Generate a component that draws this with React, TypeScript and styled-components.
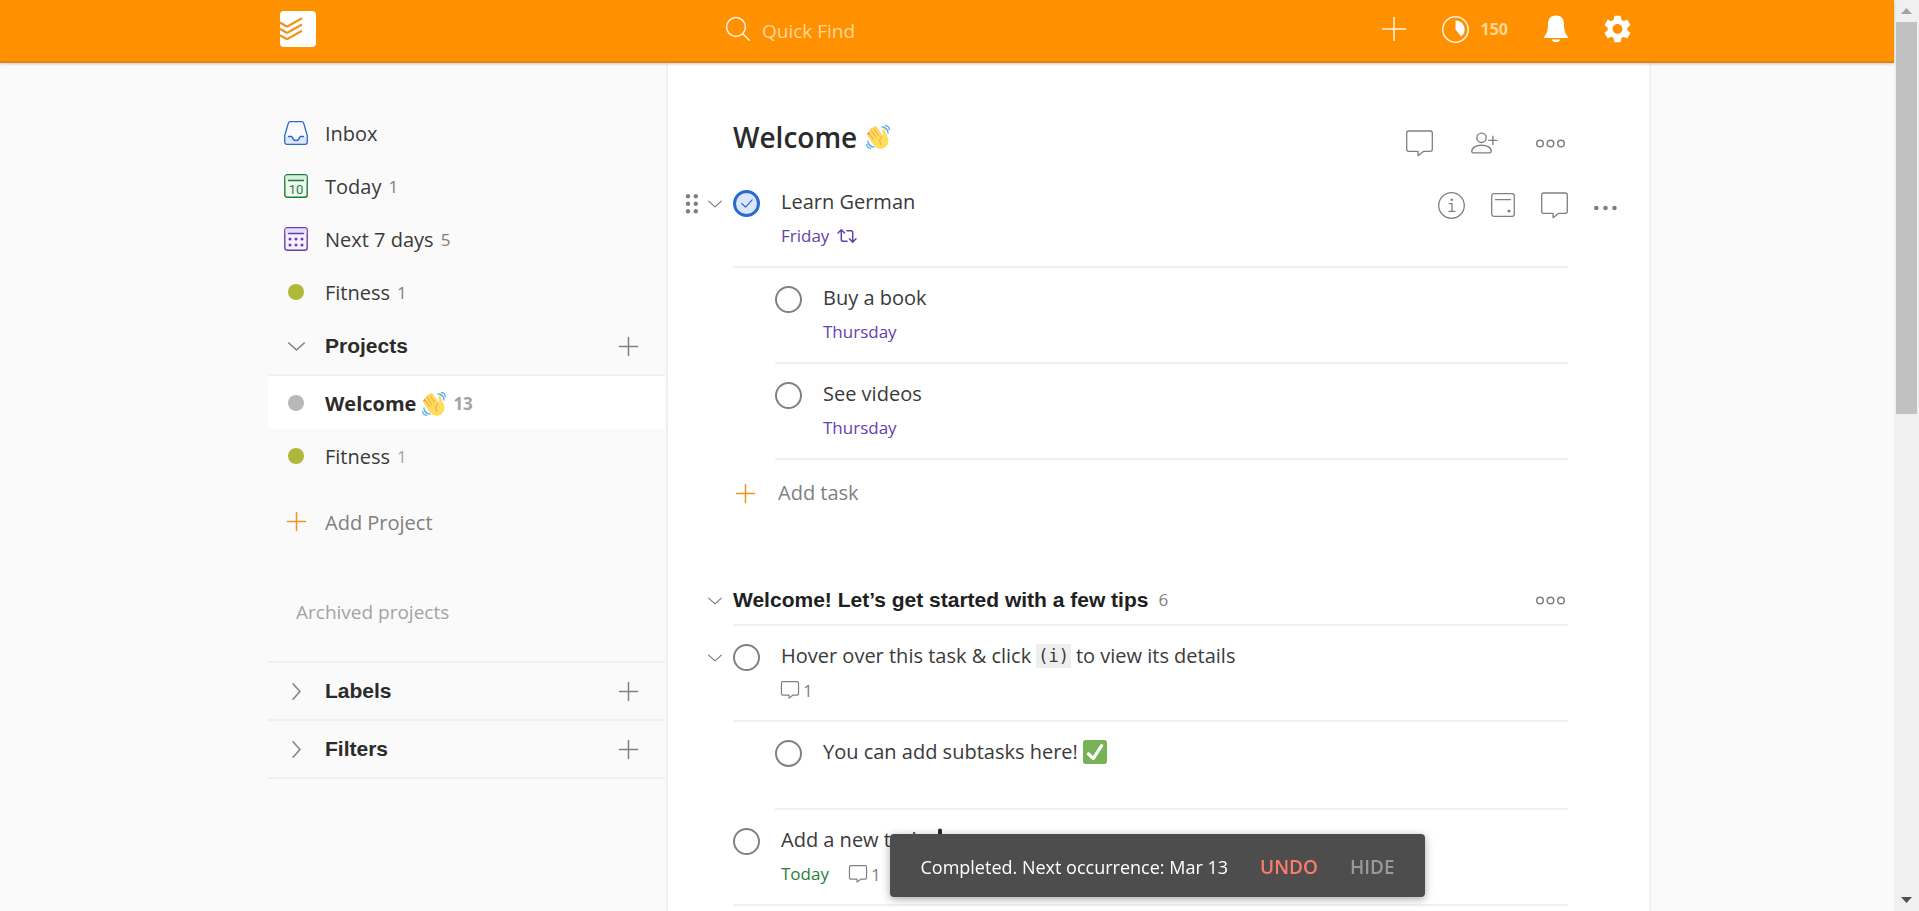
import React from 'react';
import styled, { createGlobalStyle, css } from 'styled-components';

const sans = `'Segoe UI', 'Open Sans', 'Noto Sans', sans-serif`;
const heading = `'Liberation Sans', Arial, sans-serif`;

const color = {
  orange: '#ff9100',
  orangeDark: '#e0840f',
  text: '#3a3a3a',
  strong: '#2b2b2b',
  gray: '#808080',
  light: '#a3a3a3',
  line: '#f0f0f0',
  panel: '#fafafa',
  purple: '#6440ae',
  green: '#1f7f36',
  blue: '#2a6ad0',
  olive: '#afb83b',
  cream: '#ffd79b',
};

const GlobalStyle = createGlobalStyle`
  *, *::before, *::after { box-sizing: border-box; }
  body {
    margin: 0;
    font-family: ${sans};
    font-size: 20px;
    line-height: 28px;
    color: ${color.text};
    background: ${color.panel};
  }
  button {
    padding: 0;
    border: 0;
    background: none;
    font: inherit;
    color: inherit;
    cursor: pointer;
  }
  a { color: inherit; text-decoration: none; }
  h1, h2, ul { margin: 0; padding: 0; }
  ul { list-style: none; }
  svg { display: block; flex: none; overflow: visible; }
`;

/* ---------- shell ---------- */

const Shell = styled.div`
  display: flex;
  height: 100vh;
`;

const Page = styled.div`
  flex: 1;
  min-width: 0;
  display: flex;
  flex-direction: column;
`;

const Container = styled.div`
  width: 100%;
  max-width: 1408px;
  margin: 0 auto;
`;

const TopBar = styled.header`
  position: relative;
  z-index: 1;
  background: ${color.orange};
  border-bottom: 2px solid ${color.orangeDark};
  box-shadow: 0 1px 3px rgba(0, 0, 0, 0.2);
`;

const TopBarInner = styled(Container)`
  display: flex;
  align-items: center;
  height: 61px;
  padding: 0 20px 3px 37px;
`;

const Search = styled.label`
  display: flex;
  align-items: center;
  gap: 12px;
  margin-left: 410px;
`;

const SearchInput = styled.input`
  width: 320px;
  height: 32px;
  padding: 4px 0 0;
  border: 0;
  outline: 0;
  background: none;
  font: 19px ${sans};
  color: #fff;
  &::placeholder { color: ${color.cream}; opacity: 1; }
`;

const TopActions = styled.div`
  display: flex;
  align-items: center;
  gap: 36px;
  margin-left: auto;
  color: #fff;
`;

const KarmaButton = styled.button`
  display: flex;
  align-items: center;
  gap: 12px;
`;

const KarmaScore = styled.span`
  font-size: 16px;
  font-weight: 700;
  color: ${color.cream};
`;

const Scroller = styled.div`
  flex: 1;
  min-height: 0;
  overflow-y: auto;
  scrollbar-width: none;
`;

const Columns = styled(Container)`
  display: flex;
  min-height: 100%;
  padding-left: 25px;
`;

const ScrollTrack = styled.div`
  display: flex;
  flex-direction: column;
  align-items: center;
  width: 25px;
  background: #f0f0f0;
`;

const ScrollArrow = styled.div`
  display: flex;
  align-items: center;
  justify-content: center;
  height: 22px;
`;

const ScrollThumb = styled.div`
  width: 21px;
  height: 43%;
  background: #c1c1c1;
`;

const ScrollGap = styled.div`
  flex: 1;
`;

/* ---------- sidebar ---------- */

const Sidebar = styled.nav`
  width: 400px;
  flex: none;
  padding: 43px 1px 0 0;
  border-right: 2px solid ${color.line};
`;

const SideLink = styled.a<{ $active?: boolean }>`
  display: flex;
  align-items: center;
  gap: 17px;
  height: 53px;
  padding: 0 16px;
  border-radius: 4px;
  ${(p) => p.$active && css`
    background: #fff;
    color: ${color.strong};
    font-weight: 700;
  `}
`;

const SideIcon = styled.span`
  display: flex;
  justify-content: center;
  width: 24px;
`;

const SideLabel = styled.span<{ $muted?: boolean }>`
  display: flex;
  align-items: center;
  gap: 6px;
  padding-top: 2px;
  color: ${(p) => (p.$muted ? color.gray : 'inherit')};
`;

const Count = styled.span<{ $light?: boolean }>`
  padding-left: 1px;
  font-size: 17px;
  color: ${(p) => (p.$light ? color.light : color.gray)};
`;

const Dot = styled.span<{ $color: string }>`
  width: 16px;
  height: 16px;
  border-radius: 50%;
  background: ${(p) => p.$color};
`;

const SideSection = styled.div`
  display: flex;
  align-items: center;
  height: 58px;
  padding: 0 27px 0 16px;
  border-bottom: 2px solid ${color.line};
  color: ${color.gray};
`;

const SideToggle = styled.button`
  display: flex;
  align-items: center;
  gap: 17px;
  flex: 1;
  text-align: left;
`;

const SideHeading = styled.span`
  font: 700 21px/28px ${heading};
  color: ${color.strong};
`;

const AddProject = styled.button`
  display: flex;
  align-items: center;
  gap: 17px;
  height: 53px;
  margin-top: 13px;
  padding: 0 16px;
`;

const ArchivedLink = styled.a`
  display: block;
  margin: 50px 0 0;
  padding: 0 28px 35px;
  border-bottom: 2px solid ${color.line};
  font-size: 19px;
  color: ${color.light};
`;

/* ---------- main ---------- */

const Main = styled.main`
  flex: 1;
  min-width: 0;
  background: #fff;
  border-right: 2px solid ${color.line};
`;

const Row = styled.div`
  display: flex;
  align-items: flex-start;
  padding-right: 81px;
`;

const Gutter = styled.div`
  display: flex;
  align-items: center;
  justify-content: flex-end;
  gap: 10px;
  width: 65px;
  height: 64px;
  flex: none;
  padding-right: 11px;
  color: ${color.gray};
`;

const TitleRow = styled.div`
  display: flex;
  align-items: center;
  justify-content: space-between;
  height: 109px;
  padding: 51px 81px 0 65px;
`;

const Title = styled.h1`
  display: flex;
  align-items: center;
  gap: 9px;
  height: 36px;
  margin-top: -12px;
  font-size: 28px;
  font-weight: 600;
  line-height: 36px;
  color: ${color.strong};
`;

const TitleActions = styled.div`
  display: flex;
  align-items: center;
  gap: 38px;
  padding-right: 3px;
  color: ${color.gray};
`;

const TaskBody = styled.div<{ $level?: number }>`
  display: flex;
  flex: 1;
  min-height: 88px;
  margin-left: ${(p) => (p.$level ?? 0) * 42}px;
  padding: 16px 0 18px;
  border-bottom: 2px solid ${color.line};
`;

const CheckWrap = styled.span`
  display: grid;
  place-items: center;
  width: 27px;
  height: 27px;
  margin-top: 2px;
  margin-right: 21px;
  color: ${color.blue};
  > * { grid-area: 1 / 1; }
  > svg { pointer-events: none; }
`;

const Check = styled.input`
  appearance: none;
  width: 27px;
  height: 27px;
  margin: 0;
  border: 2px solid ${color.gray};
  border-radius: 50%;
  cursor: pointer;
  &:checked {
    border: 3px solid ${color.blue};
    background: #dae6fb;
  }
`;

const TaskText = styled.div`
  flex: 1;
  min-width: 0;
`;

const TaskLabel = styled.label`
  display: flex;
  align-items: center;
  gap: 5px;
  height: 28px;
  white-space: nowrap;
`;

const Code = styled.code`
  height: 24px;
  padding: 0 2px;
  background: #eeeeee;
  font: 17px/24px 'DejaVu Sans Mono', monospace;
`;

const Meta = styled.div`
  display: flex;
  align-items: center;
  gap: 20px;
  height: 24px;
  margin-top: 8px;
  font-size: 17px;
  line-height: 24px;
`;

const Due = styled.button<{ $today?: boolean }>`
  display: flex;
  align-items: center;
  gap: 8px;
  color: ${(p) => (p.$today ? color.green : color.purple)};
`;

const Comments = styled.a`
  display: flex;
  align-items: center;
  gap: 4px;
  color: ${color.gray};
`;

const CommentCount = styled.span`
  padding-top: 2px;
`;

const TaskActions = styled.div`
  display: flex;
  align-items: center;
  gap: 26px;
  height: 28px;
  margin: 3px -49px 0 0;
  color: ${color.gray};
`;

const AddTask = styled.button`
  display: flex;
  align-items: center;
  gap: 23px;
  height: 66px;
  margin-left: 68px;
  color: ${color.gray};
`;

const SectionRow = styled(Row)`
  margin-top: 46px;
`;

const SectionGutter = styled(Gutter)`
  height: 54px;
  padding-top: 4px;
`;

const SectionHeader = styled.div`
  display: flex;
  align-items: center;
  flex: 1;
  gap: 9px;
  height: 54px;
  padding: 4px 3px 0 0;
  border-bottom: 2px solid ${color.line};
  color: ${color.gray};
`;

const SectionTitle = styled.h2`
  font: 700 21px/28px ${heading};
  color: #202020;
`;

const SectionMenu = styled.button`
  margin-left: auto;
`;

/* ---------- toast ---------- */

const ToastLayer = styled.div`
  position: fixed;
  right: 0;
  bottom: 14px;
  left: 0;
  z-index: 2;
  display: flex;
  justify-content: center;
  padding-left: 396px;
  pointer-events: none;
`;

const Toast = styled.div`
  display: flex;
  align-items: center;
  gap: 32px;
  height: 63px;
  padding: 2px 30px 0;
  border-radius: 4px;
  background: #4d4d4d;
  box-shadow: 0 2px 8px rgba(0, 0, 0, 0.35);
  font-size: 18px;
  color: #fff;
  pointer-events: auto;
`;

const ToastButton = styled.button<{ $accent?: boolean }>`
  font-size: 19px;
  font-weight: 600;
  color: ${(p) => (p.$accent ? '#ff7b6d' : '#999999')};
`;

/* ---------- icons ---------- */

const line = { fill: 'none', stroke: 'currentColor', strokeLinecap: 'round', strokeLinejoin: 'round' } as const;

const Logo = () => (
  <svg width="36" height="36" viewBox="0 0 36 36">
    <rect width="36" height="36" rx="4" fill="#fff" />
    <g fill="none" stroke="#f0941f" strokeWidth="2.300" strokeLinejoin="round">
      <path d="M0 11.600l6.200 3.600a1.600 1.600 0 0 0 1.600 0L22 7.200" />
      <path d="M0 17.800l6.200 3.600a1.600 1.600 0 0 0 1.600 0L22 13.400" />
      <path d="M0 24.200l6.200 3.600a1.600 1.600 0 0 0 1.600 0L22 19.800" />
    </g>
  </svg>
);

const SearchIcon = () => (
  <svg width="24" height="24" viewBox="0 0 24 24" fill="none" stroke="#fff3dc" strokeWidth="1.500" strokeLinecap="round">
    <circle cx="10" cy="10" r="9.400" />
    <path d="M16.800 16.800L23.300 23.300" />
  </svg>
);

const Plus = ({ size = 19, stroke = 'currentColor' }: { size?: number; stroke?: string }) => (
  <svg width={size} height={size} viewBox={`0 0 ${size} ${size}`} stroke={stroke} strokeWidth="1.500" strokeLinecap="round">
    <path d={`M0.500 ${size / 2}H${size - 0.5}M${size / 2} 0.500V${size - 0.5}`} />
  </svg>
);

const Progress = () => (
  <svg width="27" height="27" viewBox="0 0 27 27">
    <circle cx="13.500" cy="13.500" r="12.700" fill="none" stroke="#fff3dc" strokeWidth="1.600" />
    <path d="M13.500 4.500a9 9 0 0 1 5.600 16.100L13.500 13.500z" fill="#fff" />
  </svg>
);

const Bell = () => (
  <svg width="24" height="28" viewBox="0 0 24 28" fill="#fff">
    <path d="M12 .5c5.200 0 8 3.300 8 8.300 0 6 .8 9.200 3.500 12.400.6.800.3 1.800-.7 1.800H1.200c-1 0-1.300-1-.7-1.800C3.200 18 4 14.800 4 8.800 4 3.800 6.800.5 12 .5z" />
    <path d="M7.800 24.500h8.400c-.6 1.800-2.200 2.700-4.200 2.700s-3.600-.9-4.200-2.700z" />
  </svg>
);

const Gear = () => (
  <svg width="27" height="28" viewBox="2.200 2 19.600 20" fill="#fff">
    <path d="M19.140 12.940c.04-.3.060-.61.060-.94 0-.32-.02-.64-.07-.94l2.030-1.580a.49.49 0 0 0 .12-.61l-1.920-3.320a.488.488 0 0 0-.59-.22l-2.390.96c-.5-.38-1.030-.7-1.620-.94l-.36-2.540a.484.484 0 0 0-.48-.41h-3.840c-.24 0-.43.17-.47.41l-.36 2.540c-.59.24-1.130.57-1.620.94l-2.390-.96c-.22-.08-.47 0-.59.22L2.740 8.870c-.12.21-.08.47.12.610l2.030 1.580c-.05.3-.09.63-.09.94s.02.640.07.940l-2.030 1.580a.49.49 0 0 0-.12.610l1.920 3.320c.12.220.37.290.59.220l2.390-.96c.5.380 1.030.7 1.620.940l.36 2.540c.05.240.24.410.48.410h3.840c.24 0 .44-.17.470-.41l.36-2.540c.59-.24 1.130-.56 1.620-.94l2.390.96c.22.080.47 0 .59-.22l1.920-3.320c.12-.22.070-.47-.12-.61l-2.010-1.580zM12 15.600A3.610 3.610 0 0 1 8.400 12c0-1.980 1.620-3.600 3.600-3.600s3.600 1.620 3.600 3.600-1.620 3.600-3.600 3.600z" />
  </svg>
);

const InboxIcon = () => (
  <svg width="24" height="24" viewBox="0 0 24 24">
    <path d="M1 15.500h6c1.200 0 1.500 4 5 4s3.800-4 5-4h6V21a2 2 0 0 1-2 2H3a2 2 0 0 1-2-2z" fill="#dce7fb" />
    <g fill="none" stroke={color.blue} strokeWidth="1.300" strokeLinejoin="round" strokeLinecap="round">
      <path d="M6.200.7h11.600c1 0 1.700.6 1.900 1.500l3.600 12.600V21c0 1.300-.9 2.300-2.200 2.300H2.900C1.600 23.300.7 22.300.7 21v-6.200L4.300 2.200C4.500 1.300 5.200.7 6.200.7z" />
      <path d="M4.500 15.500h2.700c.8 0 1.100.5 1.300 1.200.5 1.700 1.800 2.800 3.500 2.800s3-1.100 3.500-2.800c.2-.7.500-1.200 1.300-1.200h2.700" />
    </g>
  </svg>
);

const TodayIcon = () => (
  <svg width="24" height="24" viewBox="0 0 24 24">
    <rect x=".8" y=".8" width="22.400" height="22.400" rx="2.500" fill="#f0faf2" stroke={color.green} strokeWidth="1.400" />
    <path d="M1.500 1.500h21v5h-21z" fill="#d5f1db" />
    <path d="M4.500 6.500h15" stroke={color.green} strokeWidth="1.300" strokeLinecap="round" />
    <text x="12" y="19.800" textAnchor="middle" fontFamily="Roboto, sans-serif" fontSize="13" fill={color.green}>10</text>
  </svg>
);

const WeekIcon = () => (
  <svg width="24" height="24" viewBox="0 0 24 24">
    <rect x=".8" y=".8" width="22.400" height="22.400" rx="2.500" fill="#f7f1ff" stroke={color.purple} strokeWidth="1.400" />
    <path d="M1.500 1.500h21v5h-21z" fill="#e9dcfb" />
    <path d="M4.500 6.500h15" stroke={color.purple} strokeWidth="1.300" strokeLinecap="round" />
    {[12, 18].map((y) => [6, 12, 18].map((x) => <circle key={`${x}-${y}`} cx={x} cy={y} r="1.500" fill={color.purple} />))}
  </svg>
);

const ChevronDown = ({ width = 17, height = 9 }: { width?: number; height?: number }) => (
  <svg width={width} height={height} viewBox="0 0 17 9" {...line} strokeWidth="1.600">
    <path d="M.8 1l7.700 7 7.700-7" />
  </svg>
);

const ChevronRight = () => (
  <svg width="9" height="17" viewBox="0 0 9 17" {...line} strokeWidth="1.500">
    <path d="M1 .8l7 7.700-7 7.700" />
  </svg>
);

const DragDots = () => (
  <svg width="12" height="20" viewBox="0 0 12 20" fill="currentColor">
    {[2.3, 9.8, 17.300].map((y) => [2, 9.8].map((x) => <circle key={`${x}-${y}`} cx={x} cy={y} r="2.200" />))}
  </svg>
);

const CommentIcon = ({ size = 27 }: { size?: number }) => (
  <svg width={size} height={size} viewBox="0 0 27 27" {...line} strokeWidth={size < 20 ? 1.8 : 1.3}>
    <path d="M2.700 1h21.600c1.100 0 2 .9 2 2v16.300c0 1.100-.9 2-2 2h-6.600l-5.600 4.400v-4.400H2.700c-1.100 0-2-.9-2-2V3c0-1.100.9-2 2-2z" />
  </svg>
);

const AddPerson = () => (
  <svg width="27" height="22" viewBox="0 0 27 22" {...line} strokeWidth="1.400">
    <circle cx="10.500" cy="5.800" r="4.700" />
    <path d="M.8 19.200c0-3.700 4.300-5.900 9.700-5.900s9.700 2.200 9.700 5.900c0 1.200-.7 1.700-1.800 1.700H2.600c-1.100 0-1.800-.5-1.800-1.700z" />
    <path d="M17.800 8.400h8.200M21.900 4.300v8.200" />
  </svg>
);

const OpenDots = () => (
  <svg width="29" height="9" viewBox="0 0 29 9" {...line} strokeWidth="1.500">
    <circle cx="4" cy="4.500" r="3.300" />
    <circle cx="14.500" cy="4.500" r="3.300" />
    <circle cx="25" cy="4.500" r="3.300" />
  </svg>
);

const SolidDots = () => (
  <svg width="23" height="28" viewBox="0 0 23 28" fill="currentColor">
    <circle cx="2.300" cy="17" r="2.300" />
    <circle cx="11.500" cy="17" r="2.300" />
    <circle cx="20.500" cy="17" r="2.300" />
  </svg>
);

const InfoIcon = () => (
  <svg width="27" height="27" viewBox="0 0 27 27" {...line} strokeWidth="1.300">
    <circle cx="13.500" cy="13.500" r="12.800" />
    <path d="M11.200 11.600h2.800v7.600M10.900 19.300h6" />
    <circle cx="13.800" cy="7.800" r="1.300" fill="currentColor" stroke="none" />
  </svg>
);

const ScheduleIcon = () => (
  <svg width="24" height="24" viewBox="0 0 24 24" {...line} strokeWidth="1.300">
    <rect x=".7" y=".7" width="22.600" height="22.600" rx="2.200" />
    <path d="M4.500 6.700h15" />
    <circle cx="18" cy="18" r="1.600" fill="currentColor" stroke="none" />
  </svg>
);

const RepeatIcon = () => (
  <svg width="20" height="14" viewBox="0 0 20 14" {...line} strokeWidth="1.500">
    <path d="M1 4l3.300-3.300L7.600 4M4.300 1v9.500c0 1.100.7 1.800 1.800 1.800h4M19 9.800l-3.300 3.300-3.300-3.300M15.700 12.800V3.500c0-1.100-.7-1.800-1.800-1.800h-4" />
  </svg>
);

const Tick = () => (
  <svg width="12" height="9" viewBox="0 0 12 9" {...line} strokeWidth="1.200">
    <path d="M.8 4.500l3.700 3.600L11.200.9" />
  </svg>
);

const Wave = () => (
  <svg width="24" height="24" viewBox="0 0 36 36" role="img" aria-label="waving hand">
    <path fill="#EF9645" d="M4.861 9.147c.94-.657 2.357-.531 3.201.166l-.968-1.407c-.779-1.111-.5-2.313.612-3.093 1.112-.777 4.263 1.312 4.263 1.312-.786-1.122-.639-2.544.483-3.331 1.122-.784 2.676-.513 3.462.611l10.292 14.698L25 31l-12.833-2.117L2.294 14.786c-.832-1.188-.604-2.819.584-3.650" />
    <path fill="#FFDC5D" d="M2.695 17.336s-1.132-1.650.519-2.781c1.649-1.131 2.780.518 2.780.518l5.251 7.658c.181-.302.379-.6.6-.894L4.557 11.210s-1.131-1.649.519-2.780c1.649-1.131 2.780.518 2.780.518l6.855 9.997c.255-.208.516-.417.785-.622L7.549 6.732s-1.131-1.649.519-2.780c1.649-1.131 2.780.518 2.780.518l7.947 11.589c.292-.179.581-.334.871-.498L12.238 4.729s-1.131-1.649.518-2.780c1.649-1.131 2.780.518 2.780.518l7.854 11.454 1.194 1.742c-4.948 3.394-5.419 9.779-2.592 13.902.565.825 1.390.260 1.390.260-3.393-4.949-2.357-10.510 2.592-13.903L24.515 8.620s-.545-1.924 1.378-2.470c1.924-.545 2.470 1.379 2.470 1.379l1.685 5.004c.668 1.984 1.379 3.961 2.320 5.831 2.657 5.280 1.070 11.842-3.940 15.279-5.465 3.747-12.936 2.354-16.684-3.110L2.695 17.336z" />
    <path fill="#5DADEC" d="M12 32.042C8 32.042 3.958 28 3.958 24c0-.553-.405-1-.958-1s-1.042.447-1.042 1C1.958 30 6 34.042 12 34.042c.553 0 1-.489 1-1.042s-.447-.958-1-.958zM7 34c-3 0-5-2-5-5 0-.553-.447-1-1-1s-1 .447-1 1c0 4 3 7 7 7 .553 0 1-.447 1-1s-.447-1-1-1zM24 2c-.552 0-1 .448-1 1s.448 1 1 1c4 0 8 3.589 8 8 0 .552.448 1 1 1s1-.448 1-1c0-5.514-4-10-10-10zM29 .042c-.552 0-1 .406-1 .958s.448 1.042 1 1.042c3 0 4.958 2.225 4.958 4.958 0 .552.489 1 1.042 1s.958-.448.958-1C35.958 3.163 33 .042 29 .042z" />
  </svg>
);

const GreenTick = () => (
  <svg width="24" height="24" viewBox="0 0 36 36" role="img" aria-label="done">
    <path fill="#77B255" d="M36 32c0 2.209-1.791 4-4 4H4c-2.209 0-4-1.791-4-4V4c0-2.209 1.791-4 4-4h28c2.209 0 4 1.791 4 4v28z" />
    <path fill="#FFF" d="M29.280 6.362c-1.156-.751-2.704-.422-3.458.736L14.936 23.877l-5.029-4.650c-1.014-.938-2.596-.875-3.533.138-.937 1.014-.875 2.596.139 3.533l7.209 6.666c.480.445 1.090.665 1.696.665.673 0 1.534-.282 2.099-1.139.332-.506 12.500-19.270 12.500-19.270.751-1.159.421-2.707-.737-3.458z" />
  </svg>
);

const FingerUp = () => (
  <svg width="24" height="24" viewBox="0 0 24 24" fill={color.strong}>
    <path d="M11 13V2.500a2 2 0 0 1 4 0V11l5 1.500V18l-3 5H9l-5-8 2-1.500 3 2.500z" />
  </svg>
);

const ArrowHead = ({ down }: { down?: boolean }) => (
  <svg width="11" height="6" viewBox="0 0 11 6" fill={down ? '#505050' : '#a3a3a3'}>
    <path d={down ? 'M0 0h11L5.500 6z' : 'M0 6h11L5.500 0z'} />
  </svg>
);

/* ---------- composed parts ---------- */

type TaskProps = {
  id: string;
  title: React.ReactNode;
  level?: number;
  gutter?: React.ReactNode;
  done?: boolean;
  meta?: React.ReactNode;
  actions?: React.ReactNode;
};

const Task = ({ id, title, level, gutter, done, meta, actions }: TaskProps) => (
  <Row as="li">
    <Gutter>{gutter}</Gutter>
    <TaskBody $level={level}>
      <CheckWrap>
        <Check type="checkbox" id={id} defaultChecked={done} />
        {done && <Tick />}
      </CheckWrap>
      <TaskText>
        <TaskLabel htmlFor={id}>{title}</TaskLabel>
        {meta && <Meta>{meta}</Meta>}
      </TaskText>
      {actions && <TaskActions>{actions}</TaskActions>}
    </TaskBody>
  </Row>
);

const CollapseButton = () => (
  <button aria-label="Collapse">
    <ChevronDown width={14} height={8} />
  </button>
);

const SideHeader = ({ name, open }: { name: string; open?: boolean }) => (
  <SideSection>
    <SideToggle aria-expanded={!!open}>
      <SideIcon>{open ? <ChevronDown /> : <ChevronRight />}</SideIcon>
      <SideHeading>{name}</SideHeading>
    </SideToggle>
    <button aria-label={`Add to ${name}`}>
      <Plus />
    </button>
  </SideSection>
);

type SideItemProps = {
  icon: React.ReactNode;
  name: string;
  count?: number;
  light?: boolean;
  active?: boolean;
  emoji?: React.ReactNode;
};

const SideItem = ({ icon, name, count, light, active, emoji }: SideItemProps) => (
  <SideLink href="#" $active={active}>
    <SideIcon>{icon}</SideIcon>
    <SideLabel>
      {name}
      {emoji}
      {count !== undefined && <Count $light={light}>{count}</Count>}
    </SideLabel>
  </SideLink>
);

const CommentLink = ({ count }: { count: number }) => (
  <Comments href="#">
    <CommentIcon size={18} />
    <CommentCount>{count}</CommentCount>
  </Comments>
);

export default function App() {
  return (
    <>
      <GlobalStyle />
      <Shell>
        <Page>
          <TopBar>
            <TopBarInner>
              <a href="#" aria-label="Home"><Logo /></a>
              <Search>
                <SearchIcon />
                <SearchInput type="text" placeholder="Quick Find" aria-label="Quick Find" />
              </Search>
              <TopActions>
                <button aria-label="Quick add"><Plus size={24} stroke="#fff3dc" /></button>
                <KarmaButton>
                  <Progress />
                  <KarmaScore>150</KarmaScore>
                </KarmaButton>
                <button aria-label="Notifications"><Bell /></button>
                <button aria-label="Settings"><Gear /></button>
              </TopActions>
            </TopBarInner>
          </TopBar>

          <Scroller>
            <Columns>
              <Sidebar>
                <SideItem icon={<InboxIcon />} name="Inbox" />
                <SideItem icon={<TodayIcon />} name="Today" count={1} />
                <SideItem icon={<WeekIcon />} name="Next 7 days" count={5} />
                <SideItem icon={<Dot $color={color.olive} />} name="Fitness" count={1} />
                <SideHeader name="Projects" open />
                <SideItem icon={<Dot $color="#b8b8b8" />} name="Welcome" emoji={<Wave />} count={13} light active />
                <SideItem icon={<Dot $color={color.olive} />} name="Fitness" count={1} light />
                <AddProject>
                  <SideIcon><Plus stroke="#f0941f" /></SideIcon>
                  <SideLabel $muted>Add Project</SideLabel>
                </AddProject>
                <ArchivedLink href="#">Archived projects</ArchivedLink>
                <SideHeader name="Labels" />
                <SideHeader name="Filters" />
              </Sidebar>

              <Main>
                <TitleRow>
                  <Title>Welcome <Wave /></Title>
                  <TitleActions>
                    <button aria-label="Comments"><CommentIcon /></button>
                    <button aria-label="Share"><AddPerson /></button>
                    <button aria-label="Project menu"><OpenDots /></button>
                  </TitleActions>
                </TitleRow>

                <ul>
                  <Task
                    id="learn-german"
                    title="Learn German"
                    done
                    gutter={<><DragDots /><CollapseButton /></>}
                    meta={<Due>Friday <RepeatIcon /></Due>}
                    actions={
                      <>
                        <button aria-label="Details"><InfoIcon /></button>
                        <button aria-label="Schedule"><ScheduleIcon /></button>
                        <button aria-label="Comments"><CommentIcon /></button>
                        <button aria-label="More"><SolidDots /></button>
                      </>
                    }
                  />
                  <Task id="buy-book" title="Buy a book" level={1} meta={<Due>Thursday</Due>} />
                  <Task id="see-videos" title="See videos" level={1} meta={<Due>Thursday</Due>} />
                </ul>
                <AddTask>
                  <Plus stroke="#f0941f" />
                  Add task
                </AddTask>

                <SectionRow>
                  <SectionGutter><CollapseButton /></SectionGutter>
                  <SectionHeader>
                    <SectionTitle>Welcome! Let’s get started with a few tips</SectionTitle>
                    <Count>6</Count>
                    <SectionMenu aria-label="Section menu"><OpenDots /></SectionMenu>
                  </SectionHeader>
                </SectionRow>
                <ul>
                  <Task
                    id="hover"
                    title={<>Hover over this task &amp; click <Code>(i)</Code> to view its details</>}
                    gutter={<CollapseButton />}
                    meta={<CommentLink count={1} />}
                  />
                  <Task id="subtasks" title={<>You can add subtasks here! <GreenTick /></>} level={1} />
                  <Task
                    id="add-new"
                    title={<>Add a new task <FingerUp /></>}
                    meta={<><Due $today>Today</Due><CommentLink count={1} /></>}
                  />
                </ul>
              </Main>
            </Columns>
          </Scroller>
        </Page>

        <ScrollTrack aria-hidden="true">
          <ScrollArrow><ArrowHead /></ScrollArrow>
          <ScrollThumb />
          <ScrollGap />
          <ScrollArrow><ArrowHead down /></ScrollArrow>
        </ScrollTrack>
      </Shell>

      <ToastLayer>
        <Toast role="status">
          Completed. Next occurrence: Mar 13
          <ToastButton $accent>UNDO</ToastButton>
          <ToastButton>HIDE</ToastButton>
        </Toast>
      </ToastLayer>
    </>
  );
}
